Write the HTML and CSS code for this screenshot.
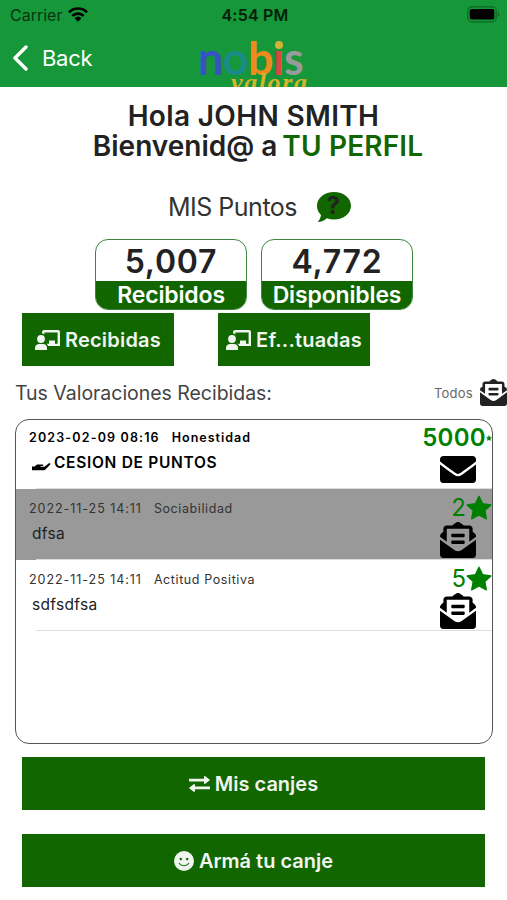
FILE: index.html
```html
<!DOCTYPE html>
<html lang="es">
<head>
    <meta charset="UTF-8">
    <meta name="viewport" content="width=device-width, initial-scale=1.0">
    <title>Nobis Valora - Perfil</title>
    <link rel="stylesheet" href="styles.css">
</head>
<body>
    <svg class="sprite" width="0" height="0">
        <symbol id="mail-open" viewBox="0 0 512 512">
            <path d="M176 216h160c8.84 0 16-7.16 16-16v-16c0-8.84-7.16-16-16-16H176c-8.84 0-16 7.16-16 16v16c0 8.84 7.16 16 16 16zm-16 80c0 8.84 7.16 16 16 16h160c8.84 0 16-7.16 16-16v-16c0-8.84-7.16-16-16-16H176c-8.84 0-16 7.16-16 16v16zm96 121.13c-16.42 0-32.84-5.06-46.86-15.19L0 250.86V464c0 26.51 21.49 48 48 48h416c26.51 0 48-21.49 48-48V250.86L302.86 401.94c-14.02 10.12-30.44 15.19-46.86 15.19zm237.61-254.18c-8.85-6.94-17.24-13.47-29.61-22.81V96c0-26.51-21.49-48-48-48h-77.55c-3.04-2.2-5.87-4.26-9.04-6.56C312.6 29.17 279.2-.35 256 0c-23.2-.35-56.59 29.17-73.41 41.44-3.17 2.3-6 4.36-9.04 6.56H96c-26.51 0-48 21.49-48 48v44.14c-12.37 9.33-20.76 15.87-29.61 22.81A47.995 47.995 0 0 0 0 200.72v10.65l96 69.35V96h320v184.72l96-69.35v-10.65c0-14.74-6.78-28.67-18.39-37.77z"/>
        </symbol>
        <symbol id="mail" viewBox="0 64 512 384">
            <path d="M502.3 190.8c3.9-3.1 9.7-.2 9.7 4.7V400c0 26.5-21.5 48-48 48H48c-26.5 0-48-21.5-48-48V195.6c0-5 5.7-7.8 9.7-4.7 22.4 17.4 52.1 39.5 154.1 113.6 21.1 15.4 56.7 47.8 92.2 47.6 35.7.3 72-32.8 92.3-47.6 102-74.1 131.6-96.3 154-113.7zM256 320c23.2.4 56.6-29.2 73.4-41.4 132.7-96.3 142.8-104.7 173.4-128.7 5.8-4.5 9.2-11.5 9.2-18.9v-19c0-26.5-21.5-48-48-48H48c-26.5 0-48 21.5-48 48v19c0 7.4 3.4 14.3 9.2 18.9 30.6 23.9 40.7 32.4 173.4 128.7 16.8 12.2 50.2 41.8 73.4 41.4z"/>
        </symbol>
        <symbol id="star" viewBox="0 0 26 25">
            <path d="M13 1.300l3.600 7.500 8.200 1.100-6 5.700 1.500 8.200L13 19.900l-7.300 3.900 1.500-8.200-6-5.700 8.200-1.100z" stroke="#008000" stroke-width="1.400" stroke-linejoin="round"/>
        </symbol>
        <symbol id="teacher" viewBox="0 0 25 20">
            <circle cx="6" cy="9" r="3.9"/>
            <path d="M0 20v-2.200C0 15.400 2 14 4.200 14H8c2.300 0 4 1.400 4 3.800V20z"/>
            <path d="M7 3.500V2.200C7 1 7.800 0 9 0h14c1.200 0 2 .9 2 2.100V16H13.200c-.4-1-1-1.700-1.700-2.300H14V10.500h6v3.200h2.600V2.400H9.400v2.100C8.700 4 7.900 3.600 7 3.500z"/>
        </symbol>
    </svg>

    <header class="header">
        <div class="status-bar">
            <div class="carrier">
                <span>Carrier</span>
                <svg class="wifi" viewBox="0 0 20 15">
                    <g fill="none" stroke="#000" stroke-width="2.600">
                        <path d="M1 5.300a12.700 12.700 0 0 1 18 0"/>
                        <path d="M4.300 8.900a8.200 8.200 0 0 1 11.400 0"/>
                    </g>
                    <path d="M10 14.800l-3.400-3.600a5 5 0 0 1 6.800 0z"/>
                </svg>
            </div>
            <div class="time">4:54 PM</div>
            <svg class="battery" viewBox="0 0 33 17">
                <rect x=".8" y=".8" width="28.400" height="15" rx="4" fill="none" stroke="#0b6a23" stroke-width="1.300"/>
                <rect x="2.700" y="3" width="24.600" height="10.600" rx="2"/>
                <path d="M30.800 5.800v5c2-.7 2-4.300 0-5z" fill="#0b6a23"/>
            </svg>
        </div>
        <div class="nav">
            <a class="back">
                <svg viewBox="0 0 16 26"><path d="M14 2L3 13l11 11" fill="none" stroke="#fff" stroke-width="3.400" stroke-linecap="round" stroke-linejoin="round"/></svg>
                <span>Back</span>
            </a>
            <div class="logo">
                <div class="nobis"><span class="n">n</span><span class="o">o</span><span class="b">b</span><span class="i">ı<i class="dot"></i></span><span class="s">s</span></div>
                <div class="valora">valora</div>
            </div>
        </div>
    </header>

    <main>
        <h1><span class="hola">Hola JOHN SMITH</span><br><span class="bienvenido">Bienvenid@ a</span><span class="perfil">TU PERFIL</span></h1>

        <div class="mis-puntos">
            <span>MIS Puntos</span>
            <span class="help">
                <svg viewBox="0 0 34 31"><path d="M17 0C26.500 0 34 6 34 13.700S26.500 27.500 17 27.500c-2.600 0-5-.4-7.200-1.200C7.500 28.400 4.500 30 .7 30c1.800-2 3-4.500 3.300-7C1.500 20.600 0 17.500 0 13.700 0 6 7.500 0 17 0z"/></svg>
                <b>?</b>
            </span>
        </div>

        <div class="puntos">
            <div class="card">
                <div class="numero">5,007</div>
                <div class="nombre">Recibidos</div>
            </div>
            <div class="card">
                <div class="numero">4,772</div>
                <div class="nombre">Disponibles</div>
            </div>
        </div>

        <div class="filtros">
            <button><svg class="teacher"><use href="#teacher"/></svg><span>Recibidas</span></button>
            <button><svg class="teacher"><use href="#teacher"/></svg><span>Ef...tuadas</span></button>
        </div>

        <div class="titulo">
            <h2>Tus Valoraciones Recibidas:</h2>
            <span class="todos">Todos</span>
            <svg class="icon-todos"><use href="#mail-open"/></svg>
        </div>

        <div class="lista">
            <div class="item nuevo">
                <div class="datos">
                    <div class="fecha"><span>2023-02-09 08:16</span><span class="valor">Honestidad</span></div>
                    <div class="mensaje">
                        <svg class="mano" viewBox="0 0 19 9"><path d="M0 4.500h2.500L5 2.500h5.500c1.300 0 1.300 1.600 0 1.600H8.500v.7h4l4-3.300c1.200-.8 2.500 0 1.700 1.100L13.500 7.500c-.6.500-1 .8-2 .8H0z"/></svg>
                        <span>CESION DE PUNTOS</span>
                    </div>
                </div>
                <div class="derecha">
                    <div class="cantidad"><span>5000</span><svg class="estrella"><use href="#star"/></svg></div>
                    <svg class="sobre cerrado"><use href="#mail"/></svg>
                </div>
            </div>
            <div class="item gris">
                <div class="datos">
                    <div class="fecha"><span>2022-11-25 14:11</span><span class="valor">Sociabilidad</span></div>
                    <div class="mensaje"><span>dfsa</span></div>
                </div>
                <div class="derecha">
                    <div class="cantidad"><span>2</span><svg class="estrella"><use href="#star"/></svg></div>
                    <svg class="sobre"><use href="#mail-open"/></svg>
                </div>
            </div>
            <div class="item">
                <div class="datos">
                    <div class="fecha"><span>2022-11-25 14:11</span><span class="valor">Actitud Positiva</span></div>
                    <div class="mensaje"><span>sdfsdfsa</span></div>
                </div>
                <div class="derecha">
                    <div class="cantidad"><span>5</span><svg class="estrella"><use href="#star"/></svg></div>
                    <svg class="sobre"><use href="#mail-open"/></svg>
                </div>
            </div>
        </div>

        <div class="acciones">
            <button>
                <svg class="flechas" viewBox="0 0 21 16"><path d="M0 2.800h15V.8c0-.8.800-1 1.300-.5l4.200 3.300c.4.300.4.700 0 1l-4.200 3.200c-.5.500-1.300.2-1.300-.6V5.400H0zM21 10.600H6V8.800c0-.8-.8-1-1.300-.6L.5 11.500c-.4.300-.4.700 0 1l4.200 3.200c.5.500 1.300.2 1.300-.6V13.200h15z"/></svg>
                <span>Mis canjes</span>
            </button>
            <button>
                <svg class="cara" viewBox="0 0 20 20"><circle cx="10" cy="10" r="10"/><circle cx="6.800" cy="8" r="1.200" fill="#116600"/><circle cx="13.200" cy="8" r="1.200" fill="#116600"/><path d="M5.300 12.500c2.300 3 7.100 3 9.400 0" fill="none" stroke="#116600" stroke-width="1.200" stroke-linecap="round"/></svg>
                <span>Armá tu canje</span>
            </button>
        </div>
    </main>
</body>
</html>
```

FILE: styles.css
```css
* {
    box-sizing: border-box;
}
body {
    margin: 0;
    font-family: Inter, Roboto, sans-serif;
    color: #222;
    background: #fff;
    height: 900px;
    overflow: hidden;
}
svg {
    display: block;
    flex-shrink: 0;
}
.sprite {
    position: absolute;
}
.header {
    height: 87px;
    background-color: #169739;
    overflow: hidden;
}
.status-bar {
    height: 29px;
    display: grid;
    grid-template-columns: 1fr auto 1fr;
    align-items: center;
    padding: 0 7px 0 10px;
    font-size: 16px;
    color: #06350f;
}
.carrier {
    display: flex;
    align-items: center;
    gap: 6px;
}
.wifi {
    width: 20px;
    height: 15px;
}
.time {
    font-weight: 600;
    letter-spacing: 0.2px;
    color: #04200a;
}
.battery {
    width: 33px;
    height: 17px;
    justify-self: end;
}
.nav {
    height: 58px;
    display: flex;
    align-items: flex-start;
}
.back {
    display: flex;
    align-items: center;
    gap: 14px;
    width: 198px;
    height: 58px;
    padding-left: 12px;
    color: #fff;
    font-size: 22px;
    letter-spacing: -0.3px;
}
.back svg {
    width: 16px;
    height: 26px;
}
.logo {
    width: 115px;
    padding-top: 8px;
}
.nobis {
    font-size: 45px;
    line-height: 42px;
    font-weight: 700;
    font-family: Lato, sans-serif;
    white-space: nowrap;
    letter-spacing: -0.6px;
}
.n { color: #3553c4; }
.o { color: #1c8a86; }
.b { color: #ef8a1d; }
.i { color: #d9483f; position: relative; }
.s { color: #999a9c; }
.dot {
    position: absolute;
    left: 2px;
    top: 10px;
    width: 8px;
    height: 8px;
    border-radius: 50%;
    background: #d3b23c;
}
.valora {
    margin: -11px 0 0 33px;
    font: italic bold 26px/30px "Liberation Serif", serif;
    letter-spacing: 1.6px;
    color: #d6b32d;
}
h1 {
    margin: 14px 0 0;
    font-size: 28px;
    line-height: 30px;
    font-weight: 600;
    text-align: center;
    padding-left: 9px;
    white-space: nowrap;
}
.hola {
    margin-right: 9px;
    letter-spacing: 0.35px;
}
.perfil {
    color: #116600;
    margin-left: 5px;
    letter-spacing: 0.15px;
}
.mis-puntos {
    display: flex;
    align-items: center;
    height: 34px;
    margin-top: 29px;
    padding-left: 168px;
    gap: 20px;
    font-size: 25px;
    letter-spacing: -0.5px;
    color: #333;
}
.help {
    position: relative;
    width: 34px;
    height: 31px;
}
.help svg {
    width: 34px;
    height: 31px;
    fill: #116600;
}
.help b {
    position: absolute;
    left: 0;
    top: 0;
    width: 32px;
    line-height: 28px;
    text-align: center;
    font-size: 24px;
    color: #222;
}
.puntos {
    display: flex;
    gap: 14px;
    margin: 15px 0 0 95px;
}
.card {
    width: 152px;
    height: 71px;
    border: 1px solid #3c863c;
    border-radius: 13px;
    overflow: hidden;
    text-align: center;
    font-weight: 600;
}
.numero {
    height: 41px;
    font-size: 32px;
    line-height: 43px;
    letter-spacing: 0.8px;
}
.nombre {
    height: 29px;
    background: #116600;
    color: #fff;
    font-size: 23px;
    line-height: 28px;
    letter-spacing: -0.15px;
}
.filtros {
    display: flex;
    gap: 44px;
    margin: 3px 0 0 22px;
}
button {
    display: flex;
    align-items: center;
    justify-content: center;
    height: 53px;
    padding: 0;
    border: none;
    background-color: #116600;
    color: #f0f5ef;
    fill: #f0f5ef;
    font-family: inherit;
    font-size: 20px;
    font-weight: 600;
    gap: 5px;
}
.filtros button {
    width: 152px;
    padding-top: 1px;
    letter-spacing: 0.2px;
}
.teacher {
    width: 25px;
    height: 20px;
}
.titulo {
    display: flex;
    align-items: center;
    height: 53px;
    padding-left: 15px;
}
h2 {
    margin: 0;
    width: 419px;
    font-size: 19.5px;
    font-weight: 400;
    letter-spacing: -0.03px;
    color: #444;
}
.todos {
    width: 46px;
    font-size: 13px;
    letter-spacing: 0.2px;
    color: #666;
}
.icon-todos {
    width: 27px;
    height: 27px;
    fill: #222;
}
.lista {
    width: 478px;
    height: 325px;
    margin-left: 15px;
    border: 1px solid #555;
    border-radius: 14px;
    overflow: hidden;
}
.item {
    position: relative;
    display: flex;
    justify-content: space-between;
    height: 71px;
    padding-left: 13px;
}
.item::after {
    content: "";
    position: absolute;
    left: 20px;
    right: 0;
    bottom: 0;
    height: 1px;
    background: #ddd;
}
.gris {
    background: #999;
}
.fecha {
    display: flex;
    gap: 12px;
    margin-top: 10px;
    font-size: 12.5px;
    line-height: 20px;
    letter-spacing: 0.95px;
    color: #333;
    white-space: nowrap;
}
.valor {
    letter-spacing: 0.6px;
}
.mensaje {
    display: flex;
    align-items: center;
    gap: 4px;
    margin: 3px 0 0 3px;
    font-size: 15.5px;
    line-height: 24px;
    letter-spacing: 0.3px;
}
.nuevo {
    height: 69px;
    color: #000;
    font-weight: 600;
}
.nuevo .fecha {
    margin-top: 8px;
    letter-spacing: 1.15px;
    color: #000;
}
.nuevo .valor {
    letter-spacing: 1px;
}
.nuevo .mensaje {
    gap: 3px;
    letter-spacing: 0.7px;
}
.mano {
    width: 19px;
    height: 9px;
    margin-top: 6px;
}
.derecha {
    width: 70px;
}
.cantidad {
    display: flex;
    align-items: center;
    justify-content: flex-end;
    height: 33px;
    padding-top: 4px;
    font-size: 24px;
    color: #008000;
}
.nuevo .cantidad {
    padding-top: 2px;
    letter-spacing: 0.3px;
}
.estrella {
    width: 26px;
    height: 25px;
    fill: #008000;
}
.nuevo .estrella {
    width: 6px;
    height: 6px;
}
.sobre {
    width: 36px;
    height: 36px;
    margin-left: 18px;
}
.cerrado {
    height: 27px;
    margin-top: 3px;
}
.acciones {
    display: flex;
    flex-direction: column;
    gap: 24px;
    padding: 13px 22px 0;
}
.flechas {
    width: 21px;
    height: 16px;
}
.cara {
    width: 20px;
    height: 20px;
}
```
